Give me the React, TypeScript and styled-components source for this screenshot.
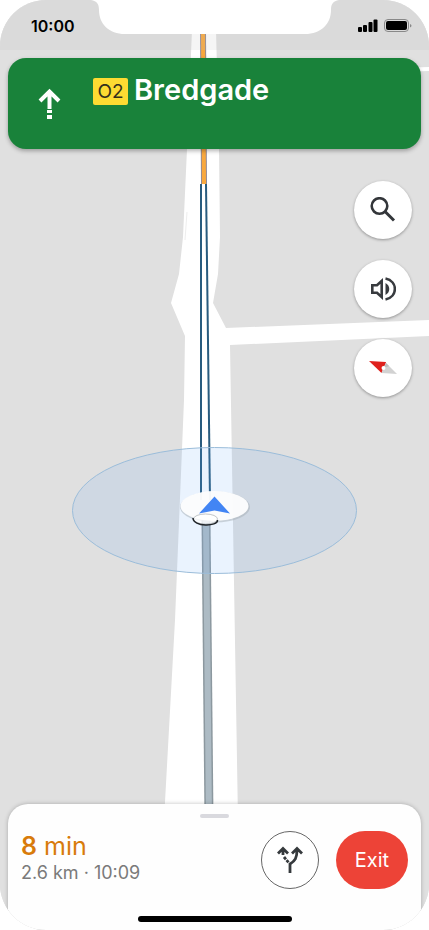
import React from 'react';
import styled, { createGlobalStyle } from 'styled-components';

const GlobalStyle = createGlobalStyle`
  * { box-sizing: border-box; }
  body { margin: 0; background: #ffffff; font-family: Inter, "Liberation Sans", sans-serif; }
  button { font: inherit; margin: 0; padding: 0; cursor: pointer; }
  svg { display: block; }
`;

const Screen = styled.main`
  position: relative;
  isolation: isolate;
  display: flex;
  flex-direction: column;
  min-height: 100vh;
  overflow: hidden;
  border-radius: 46px;
  background: #e0e0e0;
`;

const MapCanvas = styled.svg`
  position: absolute;
  inset: 0;
  z-index: -1;
  width: 100%;
  height: 100%;
`;

const StatusBar = styled.header`
  display: grid;
  grid-template-columns: 1fr 248px 1fr;
  height: 50px;
  background: rgba(190, 190, 190, 0.15);
`;

const Clock = styled.time`
  padding-top: 16px;
  padding-left: 31px;
  font-size: 16px;
  line-height: 20px;
  font-weight: 600;
  color: #000000;
  white-space: nowrap;
`;

const StatusIcons = styled.div`
  display: flex;
  justify-content: flex-end;
  padding-top: 19px;
  padding-right: 17px;
`;

const Banner = styled.section`
  display: flex;
  height: 91px;
  margin: 8px 8px 0;
  padding: 0 27px;
  gap: 31px;
  border-radius: 18px;
  background: #19823a;
  box-shadow: 0 2px 4px rgba(0, 0, 0, 0.3);
`;

const ArrowSlot = styled.div`
  display: flex;
  align-items: center;
`;

const StreetLine = styled.h1`
  display: flex;
  align-items: center;
  height: 36px;
  margin: 14px 0 0;
  gap: 6px;
  font-size: 29px;
  line-height: 36px;
  font-weight: 600;
  color: #ffffff;
`;

const RoadShield = styled.span`
  width: 35px;
  height: 27px;
  margin-top: 3px;
  border-radius: 2px;
  background: #fddb32;
  color: #33301c;
  font-size: 19px;
  line-height: 27px;
  font-weight: 400;
  text-align: center;
`;

const MapControls = styled.nav`
  display: flex;
  flex: 1;
  flex-direction: column;
  align-items: flex-end;
  gap: 21px;
  padding: 32px 17px;
`;

const RoundButton = styled.button<{ $outlined?: boolean }>`
  display: grid;
  place-items: center;
  width: 58px;
  height: 58px;
  border: ${(p) => (p.$outlined ? '1px solid #666666' : 'none')};
  border-radius: 50%;
  background: #ffffff;
  box-shadow: ${(p) => (p.$outlined ? 'none' : '0 1px 3px rgba(0, 0, 0, 0.35)')};
`;

const Sheet = styled.section`
  display: flex;
  flex-direction: column;
  align-items: center;
  height: 126px;
  margin: 0 8px;
  border-radius: 20px 20px 0 0;
  background: #fefefe;
  box-shadow: 0 0 4px rgba(0, 0, 0, 0.25);
`;

const Grabber = styled.div`
  width: 29px;
  height: 4px;
  margin-top: 10px;
  border-radius: 2px;
  background: #d9d9de;
`;

const TripRow = styled.div`
  display: flex;
  align-items: center;
  align-self: stretch;
  gap: 17px;
  height: 58px;
  margin-top: 13px;
  padding: 0 13px;
`;

const TripInfo = styled.div`
  flex: 1;
  padding-bottom: 4px;
`;

const Duration = styled.p`
  margin: 0;
  font-size: 25px;
  line-height: 30px;
  color: #d87b0b;
  strong { font-weight: 600; }
`;

const TripMeta = styled.p`
  margin: 0;
  font-size: 18px;
  line-height: 24px;
  color: #7a7a7a;
`;

const ExitButton = styled.button`
  width: 72px;
  height: 58px;
  border: 0;
  border-radius: 29px;
  background: #ed4337;
  color: #ffffff;
  && { font-size: 20px; }
`;

const HomeIndicator = styled.div`
  width: 154px;
  height: 6px;
  margin-top: 27px;
  border-radius: 3px;
  background: #000000;
`;

const RouteMap = () => (
  <MapCanvas viewBox="0 0 429 930" preserveAspectRatio="xMidYMid slice" role="img" aria-label="Route map">
    <rect width="429" height="930" fill="#e0e0e0" />
    <path d="M400 68 429 67V71L400 72Z" fill="#fff" />
    <path d="M192 30 187 149 183 237 179 274 171 303 185 336 184 400 175 620 164 820H238L230 345 429 336V320L226 328 213 303 218 274 220 237 219 149 216 30Z" fill="#fff" />
    <path d="M187 212 185 240" stroke="#eeeeee" />
    <path d="M206 520 209 820" stroke="#8c989f" strokeWidth="9" />
    <path d="M206 520 209 820" stroke="#adbbc4" strokeWidth="6" />
    <path d="M201 184V500" stroke="#285b7e" strokeWidth="2" />
    <path d="M206 184 210 500" stroke="#285b7e" strokeWidth="2" />
    <path d="M203 30 204 184" stroke="#928994" strokeWidth="6" />
    <path d="M203 30 204 184" stroke="#f8a83e" strokeWidth="4" />
    <ellipse cx="214.500" cy="510.500" rx="142" ry="63" fill="#6aaaf8" fillOpacity=".14" stroke="#9bbdda" />
    <ellipse cx="215" cy="507" rx="35" ry="15.500" fill="#aab3ba" fillOpacity=".55" />
    <ellipse cx="214.500" cy="506" rx="34" ry="15" fill="#fff" fillOpacity=".93" />
    <ellipse cx="205.500" cy="519" rx="12" ry="5" fill="#fff" fillOpacity=".8" stroke="#c2c6c9" />
    <path d="M193 518C193 527 218 527 217.500 520" fill="none" stroke="#202428" strokeWidth="1.500" />
    <path d="M214.500 496.500 230 513.500 214.500 510.500 199 513.500Z" fill="#4285f4" />
  </MapCanvas>
);

export default function App() {
  return (
    <>
      <GlobalStyle />
      <Screen>
        <RouteMap />
        <StatusBar>
          <Clock>10:00</Clock>
          <svg width="248" height="34" viewBox="0 0 248 34" aria-hidden="true">
            <path d="M0 0C6 1 8 4 8 10C8 24 18 34 34 34H214C230 34 240 24 240 10C240 4 242 1 248 0Z" fill="#fff" />
          </svg>
          <StatusIcons>
            <svg width="54" height="14" viewBox="0 0 54 14" role="img" aria-label="Signal and battery">
              <g fill="#000">
                <rect y="8" width="4" height="5" rx="1" />
                <rect x="5" y="6" width="4" height="7" rx="1" />
                <rect x="10.500" y="3" width="4" height="10" rx="1" />
                <rect x="15.500" y=".5" width="4" height="12.500" rx="1" />
              </g>
              <rect x="26.500" y=".5" width="24" height="12" rx="3.500" fill="none" stroke="#888" />
              <rect x="28" y="2" width="21" height="9" rx="2" fill="#000" />
              <path d="M52 5C54 5.500 54 8 52 8.500Z" fill="#888" />
            </svg>
          </StatusIcons>
        </StatusBar>
        <Banner>
          <ArrowSlot>
            <svg width="27" height="32" viewBox="0 0 27 32" role="img" aria-label="Continue straight">
              <path d="M5 13 14.500 3.500 24 13M14.500 4V21" fill="none" stroke="#fff" strokeWidth="4" />
              <path d="M12 22h5v3h-5zM12 27h5v4h-5z" fill="#fff" />
            </svg>
          </ArrowSlot>
          <StreetLine>
            <RoadShield>O2</RoadShield>
            Bredgade
          </StreetLine>
        </Banner>
        <MapControls aria-label="Map controls">
          <RoundButton aria-label="Search">
            <svg width="26" height="26" viewBox="0 0 26 26" fill="none" stroke="#33363a">
              <circle cx="9.500" cy="9" r="7.800" strokeWidth="2.600" />
              <path d="M15 14.500 24 23.500" strokeWidth="3" />
            </svg>
          </RoundButton>
          <RoundButton aria-label="Sound">
            <svg width="26" height="26" viewBox="0 0 26 26" fill="none" stroke="#383b3f">
              <path d="M2.300 9.300H7L11.700 5V21L7 16.700H2.300Z" strokeWidth="2.600" />
              <path d="M15.500 7C20.500 9.500 20.500 16.500 15.500 19Z" fill="#383b3f" stroke="none" />
              <path d="M15.500 2.500C28 5 28 21 15.500 23.500" strokeWidth="2.600" />
            </svg>
          </RoundButton>
          <RoundButton aria-label="Compass">
            <svg width="28" height="14" viewBox="0 0 28 14">
              <path d="M0 0 17 1 15.500 7 12.500 12Z" fill="#df211d" />
              <path d="M17 2 28 13 12.500 12 14 7Z" fill="#d2d2d2" />
              <path d="M17 2 20 5 15 7Z" fill="#bdbdbd" />
              <circle cx="14.500" cy="7" r="2" fill="#fff" />
            </svg>
          </RoundButton>
        </MapControls>
        <Sheet>
          <Grabber />
          <TripRow>
            <TripInfo>
              <Duration><strong>8</strong> min</Duration>
              <TripMeta>2.6 km · 10:09</TripMeta>
            </TripInfo>
            <RoundButton $outlined aria-label="Alternate routes">
              <svg width="28" height="28" viewBox="0 0 28 28" fill="none" stroke="#363a3d" strokeWidth="2.800">
                <path d="M14 27V18C19 15 21 12 21 4M16 7.500 21 2.500 26 7.500M2 7.500 7 2.500 12 7.500M7 3V9" />
                <path d="M18 6 21 3 24 6ZM4 6 7 3 10 6Z" fill="#363a3d" stroke="none" />
                <path d="M8 11 13 17" strokeDasharray="3 1" />
              </svg>
            </RoundButton>
            <ExitButton>Exit</ExitButton>
          </TripRow>
          <HomeIndicator />
        </Sheet>
      </Screen>
    </>
  );
}
